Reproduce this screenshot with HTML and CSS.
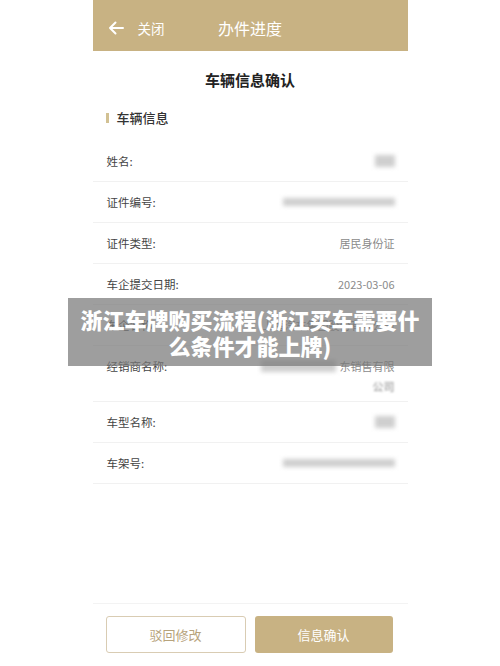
FILE: index.html
```html
<!DOCTYPE html>
<html>
<head>
    <meta charset="utf-8">
    <title>办件进度</title>
    <meta name="viewport" content="width=device-width, initial-scale=1.0">
    <link rel="stylesheet" href="styles.css">
</head>
<body>
    <div class="page">
        <div class="phone">
            <div class="topbar">
                <a class="back" href="#">
                    <svg width="16" height="14" viewBox="0 0 16 14"><path d="M15 7H2M7.5 1.5L2 7l5.5 5.5" fill="none" stroke="#fff" stroke-width="2" stroke-linecap="round" stroke-linejoin="round"/></svg>
                    <span>关闭</span>
                </a>
                <div class="topbar-title">办件进度</div>
            </div>

            <h2 class="page-title">车辆信息确认</h2>

            <div class="section-head">车辆信息</div>

            <div class="rows">
                <div class="row">
                    <span class="label">姓名:</span>
                    <span class="value"><i class="mask mask-short"></i></span>
                </div>
                <div class="row">
                    <span class="label">证件编号:</span>
                    <span class="value"><i class="mask mask-long"></i></span>
                </div>
                <div class="row">
                    <span class="label">证件类型:</span>
                    <span class="value">居民身份证</span>
                </div>
                <div class="row">
                    <span class="label">车企提交日期:</span>
                    <span class="value">2023-03-06</span>
                </div>
                <div class="row">
                    <span class="label">车企名称:</span>
                    <span class="value">上海汽车集团股份有限公司</span>
                </div>
                <div class="row row-tall">
                    <span class="label">经销商名称:</span>
                    <span class="value">
                        <span class="line"><i class="mask mask-mid"></i>东销售有限</span>
                        <span class="line soft">公司</span>
                    </span>
                </div>
                <div class="row">
                    <span class="label">车型名称:</span>
                    <span class="value"><i class="mask mask-short"></i></span>
                </div>
                <div class="row">
                    <span class="label">车架号:</span>
                    <span class="value"><i class="mask mask-long"></i></span>
                </div>
            </div>

            <div class="footer">
                <button class="btn btn-ghost">驳回修改</button>
                <button class="btn btn-main">信息确认</button>
            </div>
        </div>

        <div class="banner">浙江车牌购买流程(浙江买车需要什<br>么条件才能上牌)</div>
    </div>
</body>
</html>
```

FILE: styles.css
```css
body {
    margin: 0;
    padding: 0;
    background-color: #fff;
    font-family: "Noto Sans CJK SC", "Noto Sans", sans-serif;
    color: #444;
}
.page {
    position: relative;
    width: 500px;
    height: 666px;
    overflow: hidden;
}
.phone {
    width: 315px;
    height: 666px;
    margin: 0 auto;
    display: flex;
    flex-direction: column;
    background-color: #fff;
}
.topbar {
    position: relative;
    height: 51px;
    padding-top: 5px;
    box-sizing: border-box;
    background-color: #c8b283;
    display: flex;
    align-items: center;
    justify-content: center;
}
.back {
    position: absolute;
    left: 15px;
    top: 5px;
    bottom: 0;
    display: flex;
    align-items: center;
    gap: 14px;
    color: #fff;
    text-decoration: none;
    font-size: 13.5px;
}
.topbar-title {
    color: #fff;
    font-size: 16px;
}
.page-title {
    margin: 0;
    padding-top: 19px;
    line-height: 20px;
    text-align: center;
    font-size: 15px;
    font-weight: bold;
    color: #222;
}
.section-head {
    padding: 18px 0 13px 24px;
    line-height: 20px;
    font-size: 13px;
    font-weight: 500;
    color: #333;
    position: relative;
}
.section-head::before {
    content: "";
    position: absolute;
    left: 13px;
    top: 23px;
    width: 3px;
    height: 10px;
    background-color: #d2c193;
}
.row {
    display: flex;
    justify-content: space-between;
    align-items: flex-start;
    padding: 10px 13px 10px 14px;
    line-height: 20px;
    border-bottom: 1px solid #f1f1f1;
    font-size: 11px;
}
.row-tall {
    padding-bottom: 5px;
}
.label {
    color: #444;
    font-size: 11.5px;
}
.value {
    color: #8a8a8a;
    text-align: right;
    display: flex;
    flex-direction: column;
    align-items: flex-end;
}
.line {
    display: flex;
    align-items: center;
}
.soft {
    filter: blur(0.8px);
}
.mask {
    display: inline-block;
    background-color: #cfcfcf;
    filter: blur(2px);
}
.mask-short {
    width: 20px;
    height: 12px;
    margin-top: 4px;
}
.mask-long {
    width: 112px;
    height: 8px;
    margin-top: 6px;
}
.mask-mid {
    width: 75px;
    height: 12px;
    margin-right: 4px;
}
.footer {
    margin-top: auto;
    display: flex;
    gap: 9px;
    padding: 12px 15px 13px 13px;
    border-top: 1px solid #f3f3f3;
}
.btn {
    flex: 1;
    height: 37px;
    border-radius: 3px;
    font-family: inherit;
    font-size: 13px;
}
.btn-ghost {
    background-color: #fff;
    border: 1px solid #d9ccb3;
    color: #b7a37c;
}
.btn-main {
    background-color: #c8b283;
    border: none;
    color: #fff;
}
.banner {
    position: absolute;
    left: 68px;
    top: 298px;
    width: 364px;
    height: 68px;
    padding-top: 8px;
    box-sizing: border-box;
    background-color: rgba(120, 120, 120, 0.72);
    color: #fff;
    text-align: center;
    font-size: 22px;
    font-weight: 900;
    line-height: 26px;
    white-space: nowrap;
}
```
